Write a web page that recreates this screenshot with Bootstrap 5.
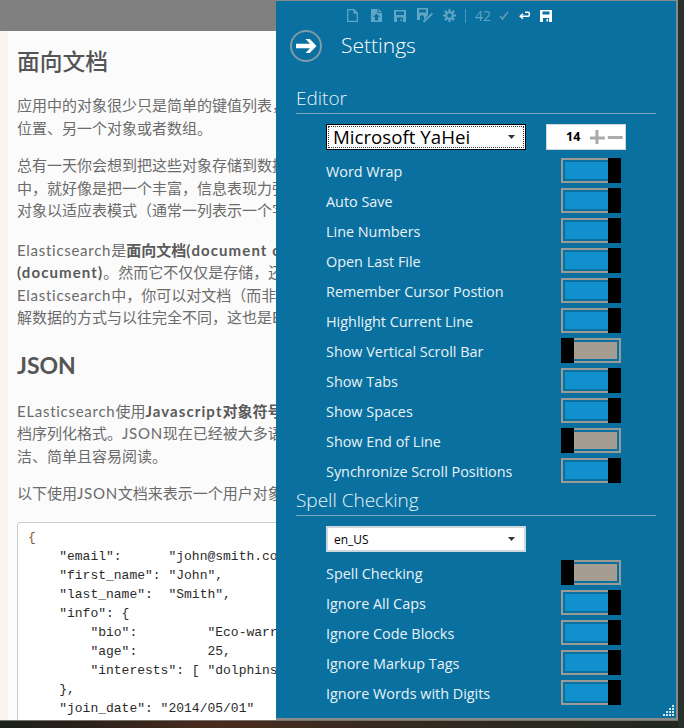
<!DOCTYPE html>
<html lang="zh">
<head>
<meta charset="utf-8">
<title>Settings</title>
<link rel="stylesheet" href="https://cdn.jsdelivr.net/npm/bootstrap@5.3.0/dist/css/bootstrap.min.css">
<style>
html,body{height:100%;margin:0;overflow:hidden}
body{background:linear-gradient(90deg,#1c211c 0,#2a211a 12%,#4a2c1e 32%,#3a2a20 50%,#20281f 100%);font-family:"Open Sans","Noto Sans CJK SC",sans-serif}
.desk{width:684px;height:728px;position:relative}
.appwin{width:678px;height:721px;position:relative;overflow:hidden;background:#fbfbfb;border-bottom:1px solid #77736c}
.desk-side{position:absolute;left:678px;top:0;width:6px;height:728px;background:#27302a}
.topgrey{height:31px;background:#808080}
.docarea{margin-left:8px;padding-left:9px;height:690px;background:#fbfbfb;box-shadow:-8px 0 0 #f8f5f1;overflow:hidden;white-space:nowrap;color:#6b6b6b;font-family:Lato,"Noto Sans CJK SC",sans-serif;font-size:15px;line-height:22.5px}
.doc-h{font-size:22.750px;line-height:34px;font-weight:500;color:#555;margin:13px 0 16px;font-family:"Noto Sans CJK SC",sans-serif}
.doc-h2{font-size:23px;line-height:30px;font-weight:700;color:#555;margin:21px 0 20px}
.docarea p{margin:0 0 15px}
.docarea p.gap17{margin-bottom:17px}
.docarea b{font-weight:700;color:#5a5a5a}
.lat{letter-spacing:.72px}
.docarea b .lat{letter-spacing:1.1px}
.codebox{margin:0;width:400px;height:220px;background:#fff;border:1px solid #ccc;border-radius:3px;padding:5px 10px;font:13px/19px "Liberation Mono",monospace;color:#2b2b2b;overflow:hidden}
.codeline{white-space:pre;height:19px}
.brk{color:#7d5a38}
.setpanel{position:absolute;left:276px;top:0;width:402px;height:720px;background:#09709f;border-top:1px solid #8a8a8a;border-right:2px solid #8a8a8a;border-bottom:2px solid #8a8a8a;color:#e9f3f8;font-family:"Open Sans",sans-serif}
.tbar{display:grid;grid-template-columns:24px 24px 24px 25px 24px 8px 28px 14px 26px 18px;justify-items:center;align-items:center;height:29px;padding-left:64px;color:#5ea5c6}
.tbar svg{display:block}
.tbar .live{color:#fff}
.tsep{width:1px;height:14px;background:#4f97b8}
.tcount{font-size:14px;line-height:1;color:#5ea5c6}
.thead{display:flex;align-items:center;gap:19px;padding-left:14px;height:32px}
.thead-t{font-size:21px;line-height:30px;height:32px;color:#fff;font-weight:300}
.secwrap{padding:0 20px}
.sechead{height:30px;line-height:28px;font-size:19px;font-weight:300;border-bottom:1px solid #7fa9c0;margin:0}
.sechead.first{margin-top:22px}
.selrow{display:flex;align-items:center;gap:20px;padding-left:30px;margin-top:10px;margin-bottom:6px}
.setpanel .form-select{width:200px;height:26px;min-height:0;padding:1px 0 0 6px;border:2px solid #cdd9de;border-radius:0;color:#000;font-size:12px;line-height:22px;background-position:right 9px center;background-size:7px 4px;background-image:url("data:image/svg+xml,%3Csvg xmlns='http://www.w3.org/2000/svg' viewBox='0 0 9 5'%3E%3Cpath d='M0 0h9L4.500 5z' fill='%23333'/%3E%3C/svg%3E");font-family:"Open Sans",sans-serif;box-shadow:none}
.setpanel .form-select.isfocus{border:1px solid #000;outline:1px dotted #333;outline-offset:-3px;font-size:18.700px;padding:0 0 0 6px;background-position:right 10px center}
.numbox{width:80px;height:26px;background:#fff;border:1px solid #cfd6d8;display:flex;align-items:center;padding-left:19px;color:#000;font:700 12.500px/1 "Open Sans",sans-serif}
.numbox svg{margin-left:9px}
.optrow{display:flex;justify-content:space-between;align-items:flex-start;height:30px;padding:0 35px 0 30px;font-size:14.400px;line-height:32px}
.tog{width:60px;height:25px;margin-top:2px;display:flex;border:2px solid #9c9a94;padding:2px;position:relative}
.tog-fill{flex:1;background:#1091ce}
.tog-thumb{position:absolute;top:-2px;bottom:-2px;width:13px;background:#000}
.tog.on .tog-thumb{right:-2px}
.tog.off .tog-thumb{left:-2px}
.tog.off .tog-fill{background:#a59d92}
.gripdots{position:absolute;right:0;bottom:0}
</style>
</head>
<body>
<div class="desk">
  <div class="appwin">
    <div class="topgrey"></div>
    <div class="docarea">
      <h2 class="doc-h">面向文档</h2>
      <p>应用中的对象很少只是简单的键值列表，<br>位置、另一个对象或者数组。</p>
      <p class="gap17">总有一天你会想到把这些对象存储到数据<br>中，就好像是把一个丰富，信息表现力强<br>对象以适应表模式（通常一列表示一个字</p>
      <p><span class="lat">Elasticsearch</span>是<b>面向文档<span class="lat">(document o</span></b><br><b><span class="lat">(document)</span></b>。然而它不仅仅是存储，还<br><span class="lat">Elasticsearch</span>中，你可以对文档（而非<br>解数据的方式与以往完全不同，这也是<span class="lat">El</span></p>
      <h2 class="doc-h2">JSON</h2>
      <p><span class="lat">ELasticsearch</span>使用<b><span class="lat">Javascript</span>对象符号</b><br>档序列化格式。<span class="lat">JSON</span>现在已经被大多语<br>洁、简单且容易阅读。</p>
      <p class="gap17">以下使用<span class="lat">JSON</span>文档来表示一个用户对象</p>
      <div class="codebox">
        <div class="codeline brk">{</div>
        <div class="codeline">    "email":      "john@smith.com",</div>
        <div class="codeline">    "first_name": "John",</div>
        <div class="codeline">    "last_name":  "Smith",</div>
        <div class="codeline">    "info": {</div>
        <div class="codeline">        "bio":         "Eco-warrior",</div>
        <div class="codeline">        "age":         25,</div>
        <div class="codeline">        "interests": [ "dolphins"</div>
        <div class="codeline">    },</div>
        <div class="codeline">    "join_date": "2014/05/01"</div>
      </div>
    </div>

    <aside class="setpanel">
      <div class="tbar">
        <svg width="11" height="13" viewBox="0 0 11 13" fill="none" stroke="currentColor" stroke-width="1.300"><path d="M1 .7h6l3.300 3.300v8.300H.7V.7zM7 .7v3.300h3.300"/></svg>
        <svg width="11" height="13" viewBox="0 0 11 13" fill="currentColor"><path d="M0 0h6.500v4H11v9H0z"/><path d="M7.500 0 11 3.200H7.500z"/><path d="M5.500 4.500 9 8H7v3.500H4V8H2z" fill="#09709f"/></svg>
        <svg width="12" height="12" viewBox="0 0 12 12"><path fill="currentColor" d="M0 0h12v12H0z"/><path fill="#09709f" d="M2 1.500h8v3.500H2zM3 7.500h6V12H3z"/><path fill="currentColor" d="M6.500 9h1.500v2H6.500z"/></svg>
        <svg width="16" height="15" viewBox="0 0 16 15"><path fill="currentColor" d="M0 0h11v7L7 12H0z"/><path fill="#09709f" d="M2 1.500h7v3H2zM3 7.500h4V12H3z"/><path stroke="currentColor" stroke-width="1.800" d="M15.400 5.500 6.500 14"/></svg>
        <svg width="13" height="13" viewBox="0 0 13 13"><g stroke="currentColor" stroke-width="2.200"><path d="M6.500 0v13M0 6.500h13M1.900 1.900l9.200 9.200M11.100 1.900l-9.200 9.200"/></g><circle cx="6.500" cy="6.500" r="4.300" fill="currentColor"/><circle cx="6.500" cy="6.500" r="2.200" fill="#09709f"/></svg>
        <span class="tsep"></span>
        <span class="tcount">42</span>
        <svg width="10" height="9" viewBox="0 0 10 9" fill="none" stroke="#6a9db5" stroke-width="1.500"><path d="M1 5l2.500 3L9 .8"/></svg>
        <svg class="live" width="11" height="9" viewBox="0 0 11 9" fill="none" stroke="currentColor" stroke-width="1.500"><path d="M6 1.200h3.200q1.100 0 1.100 1.400v1.200q0 1.400-1.100 1.400H1.500M4 2.800 1.200 5.200 4 7.800"/></svg>
        <svg class="live" width="12" height="12" viewBox="0 0 12 12"><path fill="currentColor" d="M0 0h12v12H0z"/><path fill="#09709f" d="M2.500 1.500h7v3h-7zM3 8h6v4H3z"/><path fill="currentColor" d="M6.500 9h1.500v2.500H6.500z"/></svg>
      </div>
      <div class="thead">
        <svg width="32" height="32" viewBox="0 0 32 32" fill="none"><circle cx="16" cy="16" r="15" stroke="#7f9aaa" stroke-width="2"/><path d="M6 13.700h14L15.500 9h4.300L26.500 16l-6.700 7h-4.300l4.500-4.700H6z" fill="#fff"/></svg>
        <div class="thead-t">Settings</div>
      </div>
      <div class="secwrap">
        <h3 class="sechead first">Editor</h3>
        <div class="selrow">
          <select class="form-select isfocus" aria-label="Font"><option>Microsoft YaHei</option></select>
          <div class="numbox">14<svg width="36" height="16" viewBox="0 0 36 16"><path fill="#aaa" d="M6.500 1h3v6.500H16v3H9.500V15h-3v-4.500H1v-3h5.500zM19 7h15v3H19z"/></svg></div>
        </div>
        <div class="optrow"><span>Word Wrap</span><span class="tog on"><span class="tog-fill"></span><span class="tog-thumb"></span></span></div>
        <div class="optrow"><span>Auto Save</span><span class="tog on"><span class="tog-fill"></span><span class="tog-thumb"></span></span></div>
        <div class="optrow"><span>Line Numbers</span><span class="tog on"><span class="tog-fill"></span><span class="tog-thumb"></span></span></div>
        <div class="optrow"><span>Open Last File</span><span class="tog on"><span class="tog-fill"></span><span class="tog-thumb"></span></span></div>
        <div class="optrow"><span>Remember Cursor Postion</span><span class="tog on"><span class="tog-fill"></span><span class="tog-thumb"></span></span></div>
        <div class="optrow"><span>Highlight Current Line</span><span class="tog on"><span class="tog-fill"></span><span class="tog-thumb"></span></span></div>
        <div class="optrow"><span>Show Vertical Scroll Bar</span><span class="tog off"><span class="tog-fill"></span><span class="tog-thumb"></span></span></div>
        <div class="optrow"><span>Show Tabs</span><span class="tog on"><span class="tog-fill"></span><span class="tog-thumb"></span></span></div>
        <div class="optrow"><span>Show Spaces</span><span class="tog on"><span class="tog-fill"></span><span class="tog-thumb"></span></span></div>
        <div class="optrow"><span>Show End of Line</span><span class="tog off"><span class="tog-fill"></span><span class="tog-thumb"></span></span></div>
        <div class="optrow"><span>Synchronize Scroll Positions</span><span class="tog on"><span class="tog-fill"></span><span class="tog-thumb"></span></span></div>
        <h3 class="sechead">Spell Checking</h3>
        <div class="selrow">
          <select class="form-select" aria-label="Language"><option>en_US</option></select>
        </div>
        <div class="optrow"><span>Spell Checking</span><span class="tog off"><span class="tog-fill"></span><span class="tog-thumb"></span></span></div>
        <div class="optrow"><span>Ignore All Caps</span><span class="tog on"><span class="tog-fill"></span><span class="tog-thumb"></span></span></div>
        <div class="optrow"><span>Ignore Code Blocks</span><span class="tog on"><span class="tog-fill"></span><span class="tog-thumb"></span></span></div>
        <div class="optrow"><span>Ignore Markup Tags</span><span class="tog on"><span class="tog-fill"></span><span class="tog-thumb"></span></span></div>
        <div class="optrow"><span>Ignore Words with Digits</span><span class="tog on"><span class="tog-fill"></span><span class="tog-thumb"></span></span></div>
      </div>
      <svg class="gripdots" width="14" height="14" viewBox="0 0 14 14" fill="#d8e6ec"><path d="M10 1h2v2h-2zM7 4h2v2H7zM10 4h2v2h-2zM4 7h2v2H4zM7 7h2v2H7zM10 7h2v2h-2zM1 10h2v2H1zM4 10h2v2H4zM7 10h2v2H7zM10 10h2v2h-2z"/></svg>
    </aside>
  </div>
  <div class="desk-side"></div>
</div>
<script src="https://cdn.jsdelivr.net/npm/bootstrap@5.3.0/dist/js/bootstrap.bundle.min.js"></script>
</body>
</html>
